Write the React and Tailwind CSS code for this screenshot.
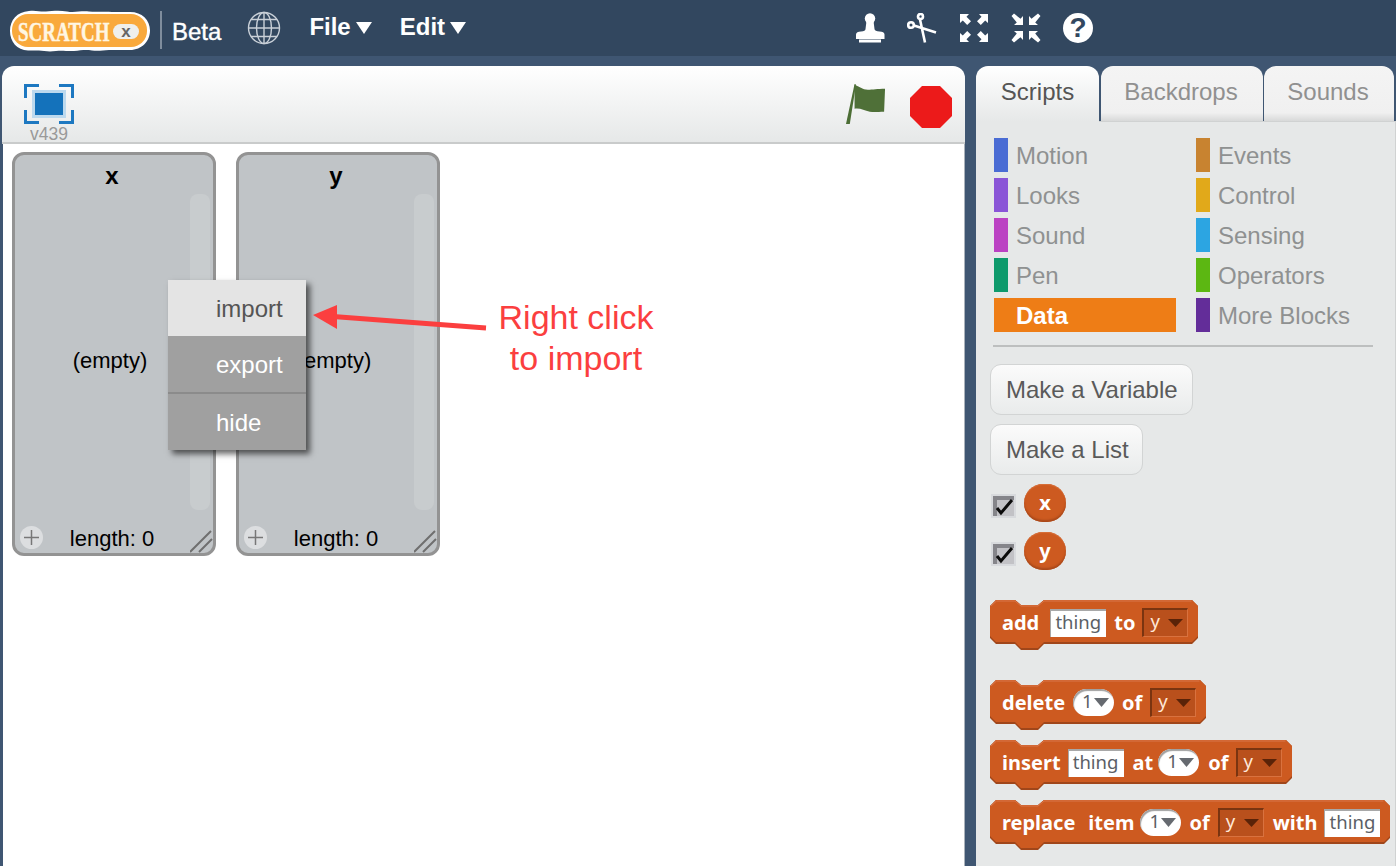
import React from "react";

const SANS = { fontFamily: '"Liberation Sans", Arial, sans-serif' };
const BLOCK = { fontFamily: '"Noto Sans", sans-serif' };

function Logo() {
  return (
    <svg width="142" height="42" viewBox="0 0 142 42" className="ml-[9px] mt-[5px] shrink-0">
      <path d="M20 1C27 0 31 2 37 1.500S50 0 58 1.500 72 .5 80 1.500 95 1 103 2h18c12 0 20 8 20 18.500S133 40 121 40H100c-6 0-10 1.500-17 .5s-11 0-18 .5-11-1-18 0-12 0-17-.5H19C8 40 1 32 1 21S8 2 20 1Z" fill="#ffffff" />
      <rect x="3" y="4" width="135" height="33" rx="16" fill="#f9a93c" />
      <g transform="translate(9 31) scale(1 1.450)">
        <text x="0" y="0" fontFamily="'Liberation Serif', serif" fontWeight="700" fill="#fff6e2" stroke="#fff6e2" strokeWidth="0.3" fontSize="19">
          SCRATCH
        </text>
      </g>
      <rect x="104" y="14" width="26" height="15" rx="7.500" fill="#efefec" />
      <text x="117" y="27" textAnchor="middle" fontFamily="'Liberation Sans', sans-serif" fontWeight="700" fontSize="17" fill="#666">x</text>
    </svg>
  );
}

function Globe() {
  return (
    <svg width="34" height="34" viewBox="0 0 34 34" className="shrink-0" fill="none" stroke="#c9d0d8" strokeWidth="1.400">
      <circle cx="17" cy="17" r="15.500" />
      <ellipse cx="17" cy="17" rx="7.500" ry="15.500" />
      <path d="M17 1.500v31M1.500 17h31M4 8.500h26M4 25.500h26" />
    </svg>
  );
}

function Tri({ className }) {
  return (
    <svg width="16" height="12" viewBox="0 0 16 12" className={className}>
      <path d="M0 0h16L8 12z" fill="#ffffff" />
    </svg>
  );
}

function Stamp() {
  return (
    <svg width="30" height="30" viewBox="0 0 30 30" fill="#fff">
      <circle cx="15" cy="5.500" r="5.200" />
      <path d="M11.500 8h7l1 8c0 1.500 2 2.500 5 2.500 3 0 5 1 5 3V26H1v-4.500c0-2 2-3 5-3 3 0 4.500-1 4.500-2.500z" />
      <rect x="4" y="26.500" width="22" height="3" />
    </svg>
  );
}

function Scissors() {
  return (
    <svg width="30" height="30" viewBox="0 0 30 30" fill="none" stroke="#fff" strokeWidth="2.600">
      <circle cx="4" cy="12" r="2.800" />
      <circle cx="13.500" cy="3.500" r="2.500" />
      <path d="M7 12.500 29 19.500M13 6.500 18 29.500" />
    </svg>
  );
}

function Grow() {
  return (
    <svg width="30" height="30" viewBox="0 0 30 30" fill="#fff">
      <path d="M1 1h9L7.500 3.800 12 8.200 8.200 12 3.800 7.500 1 10zM29 1v9l-2.800-2.500L21.800 12 18 8.200l4.500-4.400L20 1zM1 29v-9l2.800 2.500L8.200 18 12 21.800l-4.500 4.400L10 29zM29 29h-9l2.500-2.800L18 21.800 21.800 18l4.400 4.500L29 20z" />
    </svg>
  );
}

function Shrink() {
  return (
    <svg width="30" height="30" viewBox="0 0 30 30" fill="#fff">
      <path d="M12 12H3l2.800-2.500L0.500 3 3 0.500 9.500 5.800 12 3zM18 12V3l2.500 2.800L27 0.500 29.500 3l-5.300 6.500L27 12zM12 18v9l-2.500-2.800L3 29.500 0.500 27l5.300-6.500L3 18zM18 18h9l-2.800 2.500 5.300 6.500-2.500 2.500-6.500-5.300L18 27z" />
    </svg>
  );
}

function Help() {
  return (
    <div className="w-[30px] h-[30px] rounded-full bg-white flex items-center justify-center text-[#32475f] text-[28px] font-bold leading-none" style={SANS}>?</div>
  );
}

function Header() {
  return (
    <div className="h-[56px] bg-[#32475f] flex items-center shrink-0 text-white" style={SANS}>
      <Logo />
      <div className="w-[2px] h-[38px] bg-[#7f8d9d] ml-[9px] mt-[4px]" />
      <span className="ml-[10px] text-[24px] font-medium mt-[8px] [-webkit-text-stroke:0.4px_white]">Beta</span>
      <div className="ml-[26px] -mt-[1px]"><Globe /></div>
      <span className="ml-[28px] text-[24px] font-bold -mt-[2px]">File</span>
      <Tri className="ml-[5px] -mt-[1px]" />
      <span className="ml-[28px] text-[24px] font-bold -mt-[2px]">Edit</span>
      <Tri className="ml-[5px] -mt-[1px]" />
      <div className="ml-[389px] flex items-center gap-[22px] -mt-[1px]">
        <Stamp />
        <Scissors />
        <Grow />
        <Shrink />
        <Help />
      </div>
    </div>
  );
}

function VersionIcon() {
  return (
    <svg width="50" height="40" viewBox="0 0 50 40">
      <path d="M0 14V0h15v3H3v11zM35 0h15v14h-3V3H35zM0 26h3v11h12v3H0zM47 26h3v14H35v-3h12z" fill="#1d78c1" />
      <rect x="9.500" y="7.500" width="31" height="25" fill="#1472bb" stroke="#bcd9ee" strokeWidth="3" />
    </svg>
  );
}

function Flag() {
  return (
    <svg width="40" height="42" viewBox="0 0 42 44">
      <path d="M0 42 9 0l1.500.5L4 42z" fill="#4c6e35" />
      <path d="M9 1c5 1 8 5 14 5 5 0 10-1 18-1l-1 24c-6 0-10 1-15 0-6-1-10-4-16-3z" fill="#4f7038" />
    </svg>
  );
}

function Stop() {
  return (
    <svg width="42" height="42" viewBox="0 0 42 42" className="mt-[2px]">
      <path d="M12 0h18l12 12v18L30 42H12L0 30V12z" fill="#ec1a1a" />
    </svg>
  );
}

function ListMonitor({ name }) {
  return (
    <div className="relative w-[204px] h-[404px] rounded-[12px] border-[3px] border-[#939393] bg-[#c0c4c7] flex flex-col items-center text-black text-[22px]" style={SANS}>
      <div className="font-bold text-[24px] leading-none mt-[9px] -ml-[4px]">{name}</div>
      <div className="flex-1 flex items-center justify-center -ml-[8px] mt-[6px]">(empty)</div>
      <div className="h-[27px] leading-[26px] -ml-[4px]">length: 0</div>
      <div className="absolute left-[175px] top-[39px] w-[20px] h-[316px] rounded-[8px] bg-[#c8ccce]" />
      <div className="absolute left-[5px] top-[371px] w-[23px] h-[23px] rounded-full bg-[#dcdee0] flex items-center justify-center">
        <svg width="15" height="15" viewBox="0 0 15 15"><path d="M7.500 0v15M0 7.500h15" stroke="#777" strokeWidth="1.500" /></svg>
      </div>
      <svg className="absolute left-[175px] top-[375px]" width="23" height="23" viewBox="0 0 23 23" fill="none" stroke="#6f6f6f" strokeWidth="2">
        <path d="M0 22 21 1M9 22 22 9" />
      </svg>
    </div>
  );
}

function ContextMenu() {
  return (
    <div className="absolute left-[165px] top-[136px] w-[138px] shadow-[4px_4px_6px_rgba(0,0,0,0.6)] text-[24px]" style={SANS}>
      <div className="h-[56px] bg-[#e4e4e4] text-[#555555] flex items-center pl-[48px] pt-[2px]">import</div>
      <div className="h-[58px] bg-[#a0a0a0] text-white flex items-center pl-[48px] pt-[2px] border-b-2 border-[#8b8b8b]">export</div>
      <div className="h-[56px] bg-[#a0a0a0] text-white flex items-center pl-[48px] pt-[2px]">hide</div>
    </div>
  );
}

function Annotation() {
  return (
    <>
      <svg className="absolute left-[300px] top-[148px]" width="190" height="40" viewBox="0 0 190 40">
        <path d="M10 23 34 13V37z" fill="#fb3f3f" />
        <path d="M30 24.500 183 36" stroke="#fb3f3f" strokeWidth="5" fill="none" />
      </svg>
      <div className="absolute left-[456px] top-[153px] w-[234px] text-center text-[34px] leading-[41px] text-[#fb3f3f]" style={SANS}>
        Right click<br />to import
      </div>
    </>
  );
}

function StagePanel() {
  return (
    <div className="w-[963px] ml-[2px] h-full flex flex-col rounded-t-[12px] overflow-hidden shrink-0">
      <div className="h-[78px] bg-gradient-to-b from-white to-[#e6e8e8] border-b-2 border-[#c9cbcb] flex items-start shrink-0 relative" style={SANS}>
        <div className="ml-[22px] mt-[18px] flex flex-col items-center">
          <VersionIcon />
          <span className="text-[17.500px] text-[#999999] leading-none mt-[2px]">v439</span>
        </div>
        <div className="ml-auto flex items-start gap-[24px] mr-[13px] mt-[18px]">
          <Flag />
          <Stop />
        </div>
      </div>
      <div className="flex-1 bg-white ml-[1px] border-r border-[#aab2bb] relative pl-[9px] pt-[8px] flex items-start gap-[20px]">
        <ListMonitor name="x" />
        <ListMonitor name="y" />
        <ContextMenu />
        <Annotation />
      </div>
    </div>
  );
}

function Tab({ label, active, w, className }) {
  return active ? (
    <div className={"h-[56px] rounded-t-[12px] bg-gradient-to-b from-white to-[#e6e8e8] text-[#555555] text-[24px] flex items-center justify-center pb-[4px] relative z-10 " + (className || "")} style={{ width: w }}>{label}</div>
  ) : (
    <div className={"h-[55px] rounded-t-[12px] bg-gradient-to-b from-[#f4f4f4] via-[#f0f0f0] via-85% to-[#d8d9d9] text-[#909090] text-[24px] flex items-center justify-center pb-[4px] pr-[2px] " + (className || "")} style={{ width: w }}>{label}</div>
  );
}

function Category({ label, color, active }) {
  if (active) {
    return (
      <div className="h-[34px] flex items-center font-bold text-white text-[24px] pl-[22px] pt-[2px]" style={{ background: color, width: 182 }}>{label}</div>
    );
  }
  return (
    <div className="h-[34px] flex items-center text-[#8f9191] text-[24px]">
      <div className="w-[14px] h-[34px] mr-[8px]" style={{ background: color }} />
      <span className="mt-[2px]">{label}</span>
    </div>
  );
}

function Btn({ label, w }) {
  return (
    <div className="h-[51px] pl-[15px] rounded-[11px] bg-gradient-to-b from-[#fbfbfb] to-[#e9ebeb] border border-[#d2d4d4] text-[#5a5a5a] text-[24px] flex items-center whitespace-nowrap" style={{ width: w }}>{label}</div>
  );
}

function Check() {
  return (
    <svg width="25" height="24" viewBox="0 0 25 24" className="shrink-0 mt-[5px]">
      <rect width="25" height="24" fill="#d8dadd" />
      <rect x="2" y="2" width="21" height="20" fill="#c2c2c6" />
      <path d="M2 2h21v4H6v16H2z" fill="#85858a" />
      <path d="M6 14l4 5 11-13" fill="none" stroke="#0b0b0b" strokeWidth="3" />
    </svg>
  );
}

function Reporter({ label }) {
  return (
    <div className="flex items-center h-[38px] gap-[8px] ml-[1px]">
      <Check />
      <div className="w-[42px] h-[38px] rounded-full bg-[#cd5a20] shadow-[inset_0_-2px_2px_#a8481a,inset_0_1px_1px_#d8703a] text-white font-bold text-[20px] flex items-center justify-center" style={BLOCK}>{label}</div>
    </div>
  );
}

function Input({ className }) {
  return (
    <div className={"w-[56px] h-[28px] mt-[2px] bg-white shadow-[inset_1px_2px_0_#a8a8a8] text-[#5b5f66] text-[18.500px] font-normal flex items-center justify-center pb-[3px] shrink-0 " + className}>thing</div>
  );
}

function Dropdown({ className }) {
  return (
    <div className={"w-[46px] h-[29px] bg-[#b9501c] border-t-2 border-l-2 border-b border-r border-t-[#7a3410] border-l-[#7a3410] border-b-[#d9723f] border-r-[#d9723f] flex items-center justify-between pl-[6px] pr-[4px] text-[18.500px] font-normal text-[#ffe8d8] pb-[4px] shrink-0 " + className}>
      <span>y</span>
      <svg width="15" height="8" viewBox="0 0 15 8" className="mt-[4px]"><path d="M0 0h15L7.500 8z" fill="#5a2308" /></svg>
    </div>
  );
}

function Oval({ className }) {
  return (
    <div className={"w-[41px] h-[27px] rounded-full bg-white shadow-[inset_1px_2px_1px_#a0a0a0] flex items-center pl-[9px] text-[#5b5f66] text-[18.500px] font-normal shrink-0 " + className}>
      <span className="-mt-[1px] mr-[1px] leading-none">1</span>
      <svg width="15" height="9" viewBox="0 0 15 9"><path d="M0 0h15L7.500 9z" fill="#666a70" /></svg>
    </div>
  );
}

function Block({ width, children }) {
  const w = width;
  const d = `M0 6 6 0H25L31 5H48L54 0H${w - 6}L${w} 6V${38}L${w - 6} 44H54L48 50H31L25 44H6L0 38Z`;
  return (
    <div className="relative h-[50px] shrink-0" style={{ width: w, ...BLOCK }}>
      <svg className="absolute left-0 top-0" width={w} height="50" viewBox={`0 0 ${w} 50`}>
        <path d={d} fill="#a0461a" />
        <path d={`M0 6 6 0H25L31 5H48L54 0H${w - 6}L${w} 6V${36}L${w - 6} 42H54L48 48H31L25 42H6L0 36Z`} fill="#cd5a20" />
        <path d={`M1 6 6.500 1H25L31 6H48L54 1H${w - 6.5}`} fill="none" stroke="#d9764a" strokeWidth="1" />
      </svg>
      <div className="relative h-[44px] flex items-center pl-[12px] text-white font-bold text-[20px]">
        {children}
      </div>
    </div>
  );
}

function T({ children, className }) {
  return <span className={"leading-none whitespace-nowrap pt-[2px] " + (className || "")}>{children}</span>;
}

function ScriptsPanel() {
  const left = [["Motion", "#4a6cd4"], ["Looks", "#8a55d7"], ["Sound", "#bb42c3"], ["Pen", "#0e9a6c"], ["Data", "#ee7d16", true]];
  const right = [["Events", "#c88330"], ["Control", "#e1a91a"], ["Sensing", "#2ca5e2"], ["Operators", "#5cb712"], ["More Blocks", "#632d99"]];
  return (
    <div className="ml-[11px] w-[420px] h-full flex flex-col shrink-0" style={SANS}>
      <div className="flex items-start shrink-0">
        <Tab label="Scripts" active w={123} />
        <Tab label="Backdrops" w={162} className="ml-[2px]" />
        <Tab label="Sounds" w={130} className="ml-[1px]" />
      </div>
      <div className="flex-1 -mt-[1px] bg-[#e6e8e8] border-t border-r border-[#d0d2d2] pt-[16px] pl-[14px] overflow-hidden">
        <div className="grid grid-cols-[182px_1fr] gap-x-[20px] gap-y-[6px] pl-[4px]">
          {left.map((l, i) => (
            <React.Fragment key={l[0]}>
              <Category label={l[0]} color={l[1]} active={l[2]} />
              <Category label={right[i][0]} color={right[i][1]} />
            </React.Fragment>
          ))}
        </div>
        <div className="w-[380px] h-[2px] bg-[#bdbfbf] ml-[3px] mt-[13px]" />
        <div className="mt-[17px] flex flex-col gap-[9px]">
          <Btn label="Make a Variable" w={203} />
          <Btn label="Make a List" w={153} />
        </div>
        <div className="mt-[9px] flex flex-col gap-[10px]">
          <Reporter label="x" />
          <Reporter label="y" />
        </div>
        <div className="mt-[30px] flex flex-col">
          <Block width={208}>
            <T>add</T><Input className="ml-[11px]" /><T className="ml-[8px]">to</T><Dropdown className="ml-[7px]" />
          </Block>
          <div className="h-[30px] shrink-0" />
          <Block width={216}>
            <T>delete</T><Oval className="ml-[8px]" /><T className="ml-[8px]">of</T><Dropdown className="ml-[8px]" />
          </Block>
          <div className="h-[10px] shrink-0" />
          <Block width={302}>
            <T>insert</T><Input className="ml-[7px]" /><T className="ml-[9px]">at</T><Oval className="ml-[5px]" /><T className="ml-[9px]">of</T><Dropdown className="ml-[7px]" />
          </Block>
          <div className="h-[10px] shrink-0" />
          <Block width={400}>
            <T>replace</T><T className="ml-[13px]">item</T><Oval className="ml-[6px]" /><T className="ml-[8px]">of</T><Dropdown className="ml-[8px]" /><T className="ml-[9px]">with</T><Input className="ml-[7px]" />
          </Block>
        </div>
      </div>
    </div>
  );
}

export default function App() {
  return (
    <div className="w-[1396px] h-[866px] overflow-hidden bg-[#3f5672] flex flex-col">
      <Header />
      <div className="flex-1 flex pt-[10px] min-h-0">
        <StagePanel />
        <ScriptsPanel />
      </div>
    </div>
  );
}
